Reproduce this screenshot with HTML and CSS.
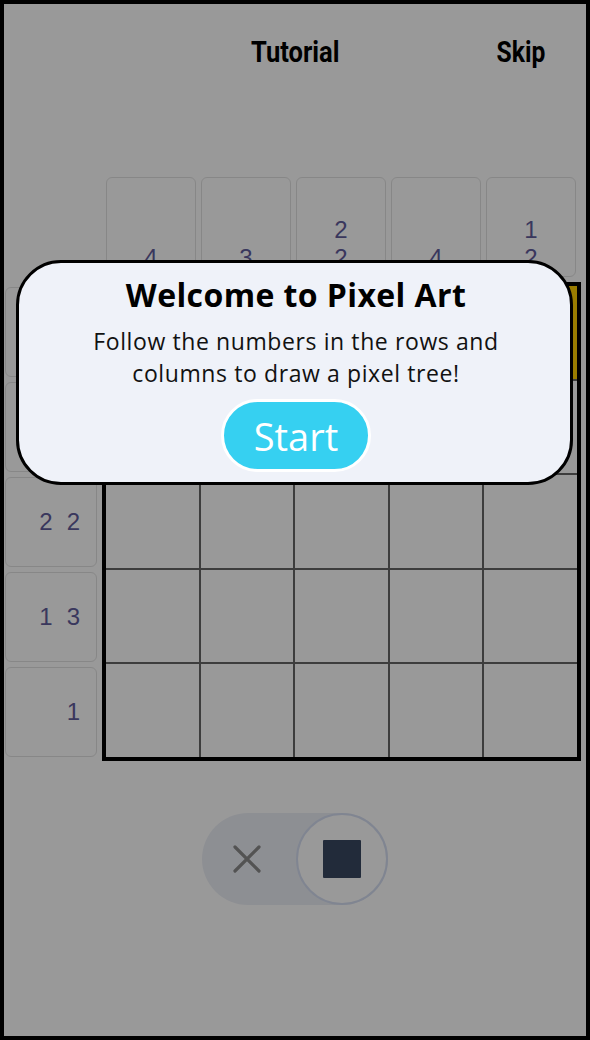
FILE: index.html
```html
<!DOCTYPE html>
<html lang="en">
<head>
<meta charset="utf-8">
<title>Pixel Art Tutorial</title>
<link rel="stylesheet" href="styles.css">
</head>
<body>
<div class="page">
  <header class="topbar">
    <span class="spacer"></span>
    <h1 class="title"><span>Tutorial</span></h1>
    <a class="skip"><span>Skip</span></a>
  </header>

  <main class="board">
    <div class="corner"></div>
    <div class="col-clues">
      <div class="clue col-clue"><span>4</span></div>
      <div class="clue col-clue"><span>3</span></div>
      <div class="clue col-clue"><span>2</span><span>2</span></div>
      <div class="clue col-clue"><span>4</span></div>
      <div class="clue col-clue"><span>1</span><span>2</span></div>
    </div>
    <div class="row-clues">
      <div class="clue row-clue"><span>5</span></div>
      <div class="clue row-clue"><span>4</span></div>
      <div class="clue row-clue"><span>2</span><span>2</span></div>
      <div class="clue row-clue"><span>1</span><span>3</span></div>
      <div class="clue row-clue"><span>1</span></div>
    </div>
    <div class="grid">
      <div class="cell"></div><div class="cell"></div><div class="cell"></div><div class="cell"></div><div class="cell hint"></div>
      <div class="cell"></div><div class="cell"></div><div class="cell"></div><div class="cell"></div><div class="cell"></div>
      <div class="cell"></div><div class="cell"></div><div class="cell"></div><div class="cell"></div><div class="cell"></div>
      <div class="cell"></div><div class="cell"></div><div class="cell"></div><div class="cell"></div><div class="cell"></div>
      <div class="cell"></div><div class="cell"></div><div class="cell"></div><div class="cell"></div><div class="cell"></div>
    </div>
  </main>

  <div class="toggle">
    <span class="opt cross">
      <svg width="28" height="28" viewBox="0 0 28 28" aria-hidden="true">
        <path d="M2 2 L26 26 M26 2 L2 26" fill="none" stroke="currentColor" stroke-width="3.2" stroke-linecap="round"/>
      </svg>
    </span>
    <span class="opt fill active"><span class="square"></span></span>
  </div>

  <div class="overlay"></div>

  <div class="modal">
    <h2 class="modal-title">Welcome to Pixel Art</h2>
    <p class="modal-text">Follow the numbers in the rows and<br>columns to draw a pixel tree!</p>
    <button class="start-btn" type="button">Start</button>
  </div>
</div>
</body>
</html>
```
FILE: styles.css
```css
* { box-sizing: border-box; }
html, body { margin: 0; padding: 0; }
body { width: 590px; height: 1040px; overflow: hidden; background: #000; }

.page {
  position: relative;
  width: 590px;
  height: 1040px;
  border: 4px solid #000;
  background: #fff;
  overflow: hidden;
}

/* header */
.topbar {
  display: grid;
  grid-template-columns: 1fr auto 1fr;
  align-items: start;
  padding: 31px 41px 0 41px;
}
.title {
  margin: 0;
  justify-self: center;
  font: 700 29px/34px Roboto, "Liberation Sans", sans-serif;
  color: #000;
}
.skip {
  justify-self: end;
  font: 700 29px/34px Roboto, "Liberation Sans", sans-serif;
  color: #000;
}
.title span, .skip span { display: inline-block; transform: scaleX(.88); }
.skip span { transform-origin: right center; transform: scaleX(.85); }

/* board */
.board {
  display: grid;
  grid-template-columns: 98px 479px;
  grid-template-rows: 105px 479px;
  margin-top: 108px;
}
.col-clues { display: flex; gap: 5px; padding-left: 4px; }
.row-clues { display: flex; flex-direction: column; gap: 5px; padding: 5px 0 0 1px; }

.clue {
  display: flex;
  border: 1px solid #e2e2e2;
  border-radius: 6px;
  color: #5f5c9c;
  font: 400 24px/28px "Liberation Sans", Arial, sans-serif;
}
.col-clue {
  width: 90px;
  height: 100px;
  flex-direction: column;
  justify-content: flex-end;
  align-items: center;
  padding-bottom: 4px;
}
.row-clue {
  width: 92px;
  height: 90px;
  align-items: center;
  justify-content: flex-end;
  gap: 14px;
  padding-right: 16px;
}

.grid {
  width: 479px;
  height: 479px;
  border: 4px solid #000;
  background: #666;
  display: grid;
  grid-template-columns: repeat(5, 1fr);
  grid-template-rows: repeat(5, 1fr);
  gap: 2px;
}
.cell { background: #fff; }
.cell.hint { background: #ffcf00; }

/* mode toggle */
.toggle {
  display: flex;
  width: 186px;
  height: 92px;
  margin: 52px auto 0;
  border-radius: 46px;
  background: #eceff6;
}
.opt { display: flex; align-items: center; justify-content: center; }
.cross { flex: 1; padding-right: 4px; color: #8a8a8a; }
.active {
  width: 92px;
  height: 92px;
  border-radius: 50%;
  background: #fff;
  border: 2px solid #d6def2;
}
.square { width: 38px; height: 38px; background: #3a4862; border-radius: 1px; }

/* tutorial overlay */
.overlay {
  position: absolute;
  inset: 0;
  background: rgba(0, 0, 0, .4);
}
.modal {
  position: absolute;
  left: 12px;
  top: 256px;
  width: 557px;
  height: 225px;
  border: 3px solid #000;
  border-radius: 45px;
  background: #eff2f9;
  text-align: center;
  padding: 12px 0 0 3px;
}
.modal-title {
  margin: 0;
  font: 700 32px/40px "Open Sans", sans-serif;
  letter-spacing: .4px;
  color: #000;
}
.modal-text {
  margin: 10px 0 0;
  font: 400 23px/32px "Open Sans", sans-serif;
  letter-spacing: .6px;
  color: #111;
}
.start-btn {
  display: inline-flex;
  align-items: center;
  justify-content: center;
  height: 73px;
  margin-top: 10px;
  padding: 0 30px;
  border: 3px solid #fff;
  border-radius: 37px;
  background: #36d0f1;
  color: #fff;
  font: 400 38px/1 "Open Sans", sans-serif;
  cursor: pointer;
}
```
